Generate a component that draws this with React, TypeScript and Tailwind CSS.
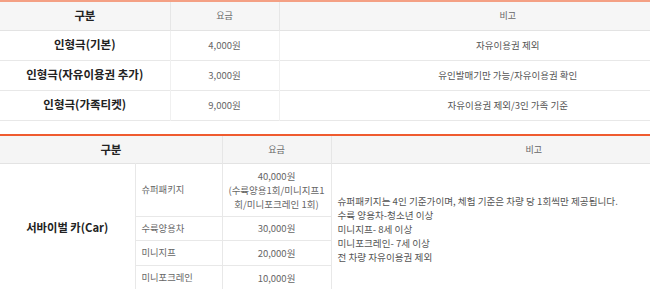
const basic = [
  { name: '인형극(기본)', price: '4,000원', note: '자유이용권 제외' },
  { name: '인형극(자유이용권 추가)', price: '3,000원', note: '유인발매기만 가능/자유이용권 확인' },
  { name: '인형극(가족티켓)', price: '9,000원', note: '자유이용권 제외/3인 가족 기준' },
];

const cars = [
  { name: '수륙양용차', price: '30,000원', h: 'h-[24px]' },
  { name: '미니지프', price: '20,000원', h: 'h-[25px]' },
  { name: '미니포크레인', price: '10,000원', h: 'h-[25px]' },
];

const notes = [
  '슈퍼패키지는 4인 기준가이며, 체험 기준은 차량 당 1회씩만 제공됩니다.',
  '수륙 양용차-청소년 이상',
  '미니지프- 8세 이상',
  '미니포크레인- 7세 이상',
  '전 차량 자유이용권 제외',
];

export default function App() {
  return (
    <div className="w-[650px] h-[289px] overflow-hidden bg-white font-['Noto_Sans_CJK_KR',sans-serif]">
      <div className="w-[736px]">
        <table className="w-full table-fixed border-collapse border-t-2 border-[#f4a084]">
          <colgroup>
            <col className="w-[170px]" />
            <col className="w-[109px]" />
            <col />
          </colgroup>
          <thead>
            <tr className="h-[29px] bg-[#f6f6f6] border-b border-[#e3e3e3]">
              <th className="border-r border-[#e6e6e6] text-[11.5px] font-bold text-[#222] tracking-[-0.3px]">구분</th>
              <th className="border-r border-[#e6e6e6] text-[9px] font-normal text-[#666]">요금</th>
              <th className="text-[9px] font-normal text-[#666]">비고</th>
            </tr>
          </thead>
          <tbody>
            {basic.map(r => (
              <tr key={r.name} className="h-[30px] border-b border-[#e8e8e8]">
                <td className="border-r border-[#f0f0f0] text-center text-[11.5px] font-bold text-[#222]">{r.name}</td>
                <td className="border-r border-[#f0f0f0] text-center text-[9.5px] text-[#666]">{r.price}</td>
                <td className="text-center text-[9.5px] text-[#555]">{r.note}</td>
              </tr>
            ))}
          </tbody>
        </table>

        <table className="mt-[13px] w-full table-fixed border-collapse border-t-2 border-[#ef5b2f]">
          <colgroup>
            <col className="w-[135px]" />
            <col className="w-[87px]" />
            <col className="w-[109px]" />
            <col />
          </colgroup>
          <thead>
            <tr className="h-[29px] bg-[#f5f5f5] border-b border-[#e3e3e3]">
              <th colSpan={2} className="border-r border-[#e6e6e6] text-[11.5px] font-bold text-[#222] tracking-[-0.3px]">구분</th>
              <th className="border-r border-[#e6e6e6] text-[9px] font-normal text-[#666]">요금</th>
              <th className="text-[9px] font-normal text-[#666]">비고</th>
            </tr>
          </thead>
          <tbody>
            <tr className="h-[53px] border-b border-[#e8e8e8]">
              <td rowSpan={4} className="border-r border-[#e8e8e8] text-center text-[11.3px] font-bold text-[#222]">서바이벌 카(Car)</td>
              <td className="border-r border-[#e8e8e8] pl-[6px] text-[9.3px] text-[#666]">슈퍼패키지</td>
              <td className="border-r border-[#e8e8e8] text-center text-[9.5px] leading-[14px] text-[#666] whitespace-nowrap">
                40,000원<br />(수륙양용1회/미니지프1<br />회/미니포크레인 1회)
              </td>
              <td rowSpan={4} className="pl-[6px] pt-[3px] align-middle text-[9.6px] leading-[14px] text-[#555]">
                {notes.map(n => (
                  <div key={n}>{n}</div>
                ))}
              </td>
            </tr>
            {cars.map(c => (
              <tr key={c.name} className={`${c.h} border-b border-[#e8e8e8]`}>
                <td className="border-r border-[#e8e8e8] pl-[6px] text-[9.3px] text-[#666]">{c.name}</td>
                <td className="border-r border-[#e8e8e8] text-center text-[9.5px] text-[#666]">{c.price}</td>
              </tr>
            ))}
          </tbody>
        </table>
      </div>
    </div>
  );
}
